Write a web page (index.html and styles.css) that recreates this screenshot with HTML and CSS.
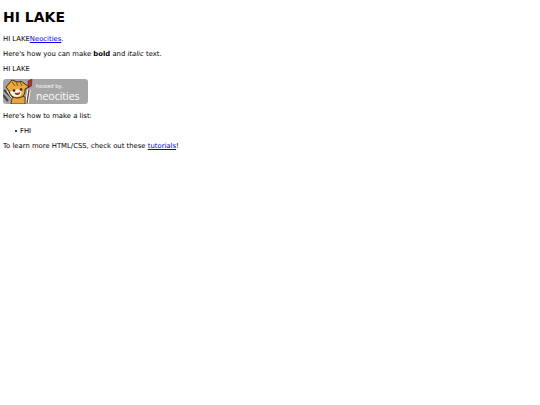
FILE: index.html
```html
<!DOCTYPE html>
<html lang="en">
<head>
    <meta charset="UTF-8">
    <meta name="viewport" content="width=device-width, initial-scale=1.0">
    <title>HI LAKE</title>
    <link rel="stylesheet" href="styles.css">
</head>
<body>
    <h1>HI LAKE</h1>
    <p>HI LAKE<a href="#">Neocities</a>.</p>
    <p>Here's how you can make <strong>bold</strong> and <em>italic</em> text.</p>
    <p class="before-badge">HI LAKE</p>
    <a class="badge" href="#">
        <svg class="cat" viewBox="0 0 32 25" width="32" height="25">
            <!-- wrench -->
            <path d="M1 11 L9 19 M0 16 L5 22" stroke="#444" stroke-width="2" fill="none"/>
            <path d="M4 12 L10 21" stroke="#fff" stroke-width="1"/>
            <!-- brush -->
            <path d="M26 11 L24 24" stroke="#fff" stroke-width="3.4"/>
            <path d="M26 11 L24 24" stroke="#6b4a2a" stroke-width="1.4"/>
            <path d="M25 2 L29 0 L28.5 7 L25 9 Z" fill="#a8322c" stroke="#5a2a20" stroke-width="0.6"/>
            <!-- body -->
            <path d="M9 19 Q15 15 22 18 L22 25 L8 25 Z" fill="#e9a43c" stroke="#3a2a1a" stroke-width="0.8"/>
            <!-- head -->
            <path d="M3 8 L9 1 L14 3 Q19 1 22 5 L26 8 L22 10 Q23 18 15 19 Q7 19 6 12 Z" fill="#eda93a" stroke="#3a2a1a" stroke-width="1"/>
            <path d="M7 13 Q13 9 18 11 Q20 17 14 18 Q9 18 7 13 Z" fill="#fff3dc"/>
            <circle cx="11" cy="11.5" r="1.3" fill="#222"/>
            <circle cx="18" cy="10.5" r="1.3" fill="#222"/>
            <path d="M12 14 Q15 17 17 13.5" stroke="#7a2a20" stroke-width="1.2" fill="#c0503a"/>
            <path d="M9 3 L12 7 M13 3 L15 7 M17 3 L19 7" stroke="#7a4a1a" stroke-width="1"/>
        </svg>
        <span class="badge-text">
            <span class="hosted">hosted by,</span>
            <span class="neo">neocities</span>
        </span>
    </a>
    <p class="after-badge">Here's how to make a list:</p>
    <ul>
        <li>FHI</li>
    </ul>
    <p>To learn more HTML/CSS, check out these <a href="#">tutorials</a>!</p>
</body>
</html>
```

FILE: styles.css
```css
body {
    font-family: "DejaVu Sans", Verdana, sans-serif;
    font-size: 6.85px;
    line-height: 8px;
    color: #000;
    background-color: #fff;
    margin: 3px;
}
h1 {
    font-size: 14px;
    line-height: 16px;
    margin: 6px 0 10px;
}
p {
    margin: 7px 0;
}
a {
    color: #0000ee;
}
ul {
    margin: 7px 0;
    padding-left: 12px;
    list-style: none;
}
li {
    display: flex;
    align-items: center;
    gap: 3px;
}
li::before {
    content: "";
    width: 2px;
    height: 2px;
    border-radius: 50%;
    background-color: #000;
}
.before-badge {
    margin-bottom: 6px;
}
.after-badge {
    margin-top: 8px;
}
.badge {
    display: flex;
    width: 85px;
    height: 25px;
    background-color: #a6a6a6;
    border-radius: 3px;
    text-decoration: none;
    color: #fff;
}
.cat {
    flex: none;
}
.badge-text {
    display: flex;
    flex-direction: column;
    justify-content: center;
    gap: 2px;
    padding-left: 1px;
}
.hosted {
    font-family: "Open Sans", sans-serif;
    font-size: 5.5px;
    line-height: 6px;
}
.neo {
    font-family: "Open Sans", sans-serif;
    font-size: 10.5px;
    line-height: 10px;
}
```
